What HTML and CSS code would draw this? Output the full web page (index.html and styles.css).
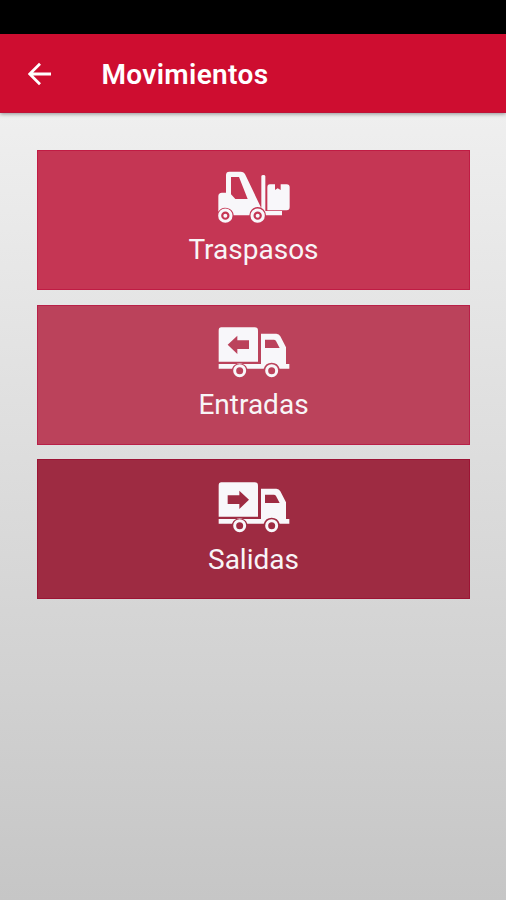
FILE: index.html
```html
<!DOCTYPE html>
<html lang="es">
<head>
<meta charset="utf-8">
<title>Movimientos</title>
<link rel="stylesheet" href="styles.css">
</head>
<body>
<div class="status-bar"></div>
<header class="app-bar">
  <svg class="back" viewBox="0 0 24 24"><path d="M23 12H2M12 1.7 1.7 12 12 22.3"/></svg>
  <h1 class="title">Movimientos</h1>
</header>
<main class="menu">
  <a class="card transfers">
    <svg class="icon" viewBox="0 0 258 192">
      <path fill-rule="evenodd" d="M48 83V30Q48 20 58 20H92Q102 20 106 29L154 130V34Q154 30 160 30Q166 30 166 34V138H216V151H168A25 25 0 0 0 118 151H71A25 25 0 0 0 25 140V94Q25 83 36 83ZM63 36V88L76 102H113L87 36Z"/>
      <path d="M180 58H195V75L203 70L212 75V58H230Q239 58 239 67V126Q239 136 230 136H172V68Q172 58 180 58Z"/>
      <g class="wheel"><circle cx="46" cy="152" r="17"/><circle cx="143" cy="152" r="17"/></g>
      <circle cx="46" cy="152" r="6"/><circle cx="143" cy="152" r="6"/>
    </svg>
    <span class="label">Traspasos</span>
  </a>
  <a class="card entries">
    <svg class="icon" viewBox="0 0 258 192">
      <path fill-rule="evenodd" d="M34 22H134Q144 22 144 32V125H26V32Q26 22 34 22ZM53 74 82 47V61H117V87H82V102Z"/>
      <path fill-rule="evenodd" d="M153 41H199Q207 41 211 49L228 82V132H238V146H209A25 25 0 0 0 161 146H112A25 25 0 0 0 66 146H26V132H153ZM165 59V84H209L198 63Q196 59 191 59Z"/>
      <g class="wheel"><circle cx="89" cy="152" r="15"/><circle cx="185" cy="152" r="15"/></g>
    </svg>
    <span class="label">Entradas</span>
  </a>
  <a class="card exits">
    <svg class="icon" viewBox="0 0 258 192">
      <path fill-rule="evenodd" d="M34 22H134Q144 22 144 32V125H26V32Q26 22 34 22ZM117 74 88 47V61H53V87H88V102Z"/>
      <path fill-rule="evenodd" d="M153 41H199Q207 41 211 49L228 82V132H238V146H209A25 25 0 0 0 161 146H112A25 25 0 0 0 66 146H26V132H153ZM165 59V84H209L198 63Q196 59 191 59Z"/>
      <g class="wheel"><circle cx="89" cy="152" r="15"/><circle cx="185" cy="152" r="15"/></g>
    </svg>
    <span class="label">Salidas</span>
  </a>
</main>
</body>
</html>
```
FILE: styles.css
```css
* { box-sizing: border-box; }
body {
  margin: 0;
  height: 900px;
  overflow: hidden;
  display: flex;
  flex-direction: column;
  font-family: Roboto, "Liberation Sans", sans-serif;
  color: #f8f5f7;
}
.status-bar { height: 34px; background: #000; }
.app-bar {
  height: 79px;
  padding-left: 28px;
  display: flex;
  align-items: center;
  background: #ce0d30;
  border-bottom: 1px solid #be1238;
  box-shadow: 0 1px 4px rgba(0, 0, 0, .4);
  z-index: 1;
}
.back {
  width: 24px;
  height: 24px;
  margin-top: 1px;
  fill: none;
  stroke: #fff;
  stroke-width: 2.8;
}
.title {
  margin: 3px 0 0 49.5px;
  font-size: 28px;
  line-height: 34px;
  font-weight: 600;
  letter-spacing: .35px;
  color: #fff;
}
.menu {
  flex: 1;
  padding: 37px 36px 0 37px;
  display: flex;
  flex-direction: column;
  gap: 14.7px;
  background: linear-gradient(#efefef, #c6c6c6);
}
.card {
  height: 140px;
  padding-top: 14px;
  display: flex;
  flex-direction: column;
  align-items: center;
  border: 1px solid;
}
.transfers { background: #c53654; border-color: #c01c44; }
.entries { background: #bb425b; border-color: #b82048; }
.exits { padding-top: 15px; background: #9e2b42; border-color: #9c1434; }
.icon {
  width: 86px;
  height: 64px;
  margin-right: 1px;
  fill: #f8f7fa;
}
.wheel { fill: none; stroke: #f8f7fa; stroke-width: 9; }
.label {
  margin-top: 4px;
  font-size: 28px;
  line-height: 34px;
}
```
